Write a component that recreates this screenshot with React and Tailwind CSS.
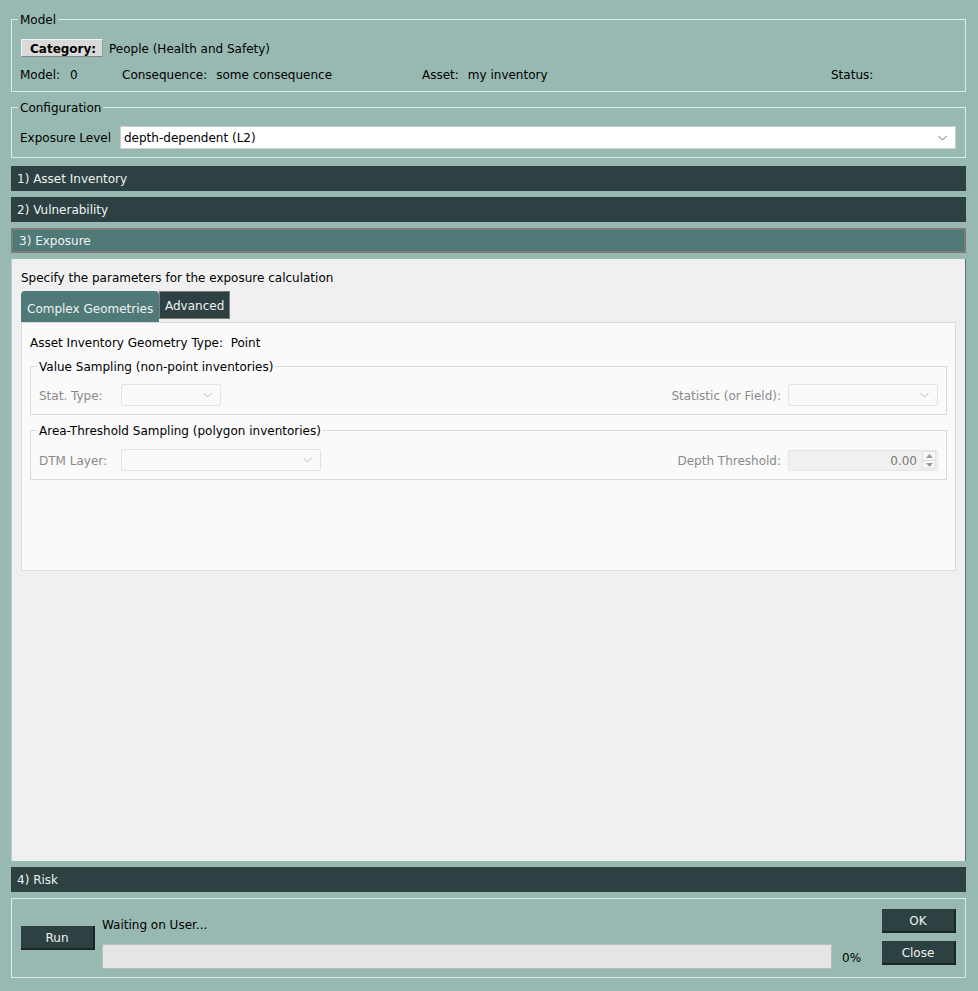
import React from "react";

function Chevron({ color = "#6f6f6f" }) {
  return (
    <svg width="9" height="6" viewBox="0 0 9 6" className="shrink-0">
      <polyline points="0.5,1 4.5,5 8.5,1" fill="none" stroke={color} strokeWidth="1" />
    </svg>
  );
}

function GroupBox({ title, children, className = "", titleClass = "text-black", borderClass = "border-[#dde9e6]" }) {
  return (
    <fieldset className={`border ${borderClass} ${className}`}>
      <legend className={`-ml-[2px] px-[2px] pt-[1px] leading-[14px] ${titleClass}`}>{title}</legend>
      {children}
    </fieldset>
  );
}

function SectionHeader({ label, active }) {
  if (active) {
    return (
      <div className="h-[25px] border-2 border-[#7b7b7b] bg-[#507a77] pl-[6px] leading-[23px] text-[#eef2f1]">
        {label}
      </div>
    );
  }
  return (
    <div className="h-[25px] bg-[#2d4142] pl-[6px] leading-[27px] text-[#eef2f1]">{label}</div>
  );
}

function DisabledCombo({ width }) {
  return (
    <div
      className={`flex h-[22px] ${width} items-center justify-end rounded-[2px] border border-[#e3e3e3] bg-[#fafafa] pr-[8px]`}
    >
      <Chevron color="#b8b8b8" />
    </div>
  );
}

function DarkButton({ label, className = "" }) {
  return (
    <button
      type="button"
      className={`h-[24px] w-[74px] border-b-2 border-r-2 border-[#1b2627] bg-[#2d4142] pt-[1px] text-[#eef2f1] ${className}`}
    >
      {label}
    </button>
  );
}

export default function App() {
  return (
    <div className="min-h-screen w-[978px] bg-[#98b8b2] pl-[11px] pr-[12px] pt-[12px] font-['DejaVu_Sans',sans-serif] text-[12px] leading-[14px] text-black">
      <GroupBox title="Model" className="px-[8px] pb-[10px]">
        <div className="mt-[12px] flex items-center">
          <div className="ml-[1px] flex h-[18px] w-[82px] items-center border-b border-r border-t border-l border-b-[#858585] border-r-[#9a9a9a] border-l-[#f2f2f2] border-t-[#f2f2f2] bg-[#d9d9d9] pl-[8px] pt-[1px] font-bold">
            Category:
          </div>
          <span className="ml-[6px] pt-[1px]">People (Health and Safety)</span>
        </div>
        <div className="mt-[10px] flex h-[14px] pt-[1px]">
          <div className="flex w-[102px] gap-[10px]">
            <span>Model:</span>
            <span>0</span>
          </div>
          <div className="flex w-[300px] gap-[9px]">
            <span>Consequence:</span>
            <span>some consequence</span>
          </div>
          <div className="flex w-[409px] gap-[9px]">
            <span>Asset:</span>
            <span>my inventory</span>
          </div>
          <span>Status:</span>
        </div>
      </GroupBox>

      <GroupBox title="Configuration" className="mt-[8px] pb-[8px] pl-[8px] pr-[9px]">
        <div className="mt-[11px] flex items-center">
          <span className="w-[100px] pt-[1px]">Exposure Level</span>
          <div className="flex h-[23px] flex-1 items-center justify-between border border-[#c8cfcd] bg-white pl-[3px] pr-[8px]">
            <span className="pt-[1px]">depth-dependent (L2)</span>
            <Chevron />
          </div>
        </div>
      </GroupBox>

      <div className="mt-[8px] flex flex-col gap-[6px]">
        <SectionHeader label="1) Asset Inventory" />
        <SectionHeader label="2) Vulnerability" />
        <SectionHeader label="3) Exposure" active />
        <div className="h-[602px] border-l border-r border-l-[#b9cfcb] border-r-[#5d716e] bg-[#f0f0f0] px-[9px] pt-[12px]">
          <p className="leading-[14px]">Specify the parameters for the exposure calculation</p>
          <div className="mt-[6px] flex items-start">
            <div className="h-[31px] w-[138px] rounded-t-[4px] bg-[#507a77] pl-[6px] pt-[11px] text-[#eef2f1]">
              Complex Geometries
            </div>
            <div className="h-[28px] border border-[#7b7b7b] bg-[#2d4142] px-[5px] pt-[7px] text-[#eef2f1]">
              Advanced
            </div>
          </div>
          <div className="h-[249px] border border-[#dcdcdc] bg-[#fafafa] px-[8px] pt-[13px]">
            <p>Asset Inventory Geometry Type:&nbsp; Point</p>
            <GroupBox
              title="Value Sampling (non-point inventories)"
              className="mt-[9px] px-[8px] pb-[8px]"
              borderClass="border-[#dadada]"
            >
              <div className="mt-[10px] flex items-center text-[#8a8a8a]">
                <span className="w-[82px] pt-[1px]">Stat. Type:</span>
                <DisabledCombo width="w-[100px]" />
                <span className="ml-auto mr-[7px] pt-[1px]">Statistic (or Field):</span>
                <DisabledCombo width="w-[150px]" />
              </div>
            </GroupBox>
            <GroupBox
              title="Area-Threshold Sampling (polygon inventories)"
              className="mt-[8px] px-[8px] pb-[8px]"
              borderClass="border-[#dadada]"
            >
              <div className="mt-[11px] flex h-[22px] items-center text-[#8a8a8a]">
                <span className="w-[82px] pt-[1px]">DTM Layer:</span>
                <DisabledCombo width="w-[200px]" />
                <span className="ml-auto mr-[7px] pt-[1px]">Depth Threshold:</span>
                <div className="flex h-[21px] w-[150px] items-center justify-end rounded-[2px] border border-[#e6e6e6] bg-[#f0f0f0] pr-[1px]">
                  <span className="mr-[5px] pt-[1px] text-[#7a7a7a]">0.00</span>
                  <div className="flex h-[18px] w-[14px] flex-col items-center justify-center gap-[2px] border border-[#e2e2e2] bg-[#f7f7f7]">
                    <svg width="7" height="4" viewBox="0 0 7 4">
                      <polygon points="0,4 3.5,0 7,4" fill="#9a9a9a" />
                    </svg>
                    <div className="h-px w-[12px] bg-[#dcdcdc]" />
                    <svg width="7" height="4" viewBox="0 0 7 4">
                      <polygon points="0,0 3.5,4 7,0" fill="#9a9a9a" />
                    </svg>
                  </div>
                </div>
              </div>
            </GroupBox>
          </div>
        </div>
        <SectionHeader label="4) Risk" />
      </div>

      <div className="mt-[6px] flex h-[80px] items-start border border-[#dde9e6]">
        <DarkButton label="Run" className="ml-[9px] mt-[27px]" />
        <div className="ml-[7px] mt-[19px] flex w-[730px] flex-col">
          <span>Waiting on User...</span>
          <div className="mt-[12px] h-[25px] border border-[#bcbcbc] bg-[#e5e5e5]" />
        </div>
        <span className="ml-[10px] mt-[52px]">0%</span>
        <div className="ml-auto mr-[9px] mt-[10px] flex flex-col gap-[8px]">
          <DarkButton label="OK" />
          <DarkButton label="Close" />
        </div>
      </div>
    </div>
  );
}
